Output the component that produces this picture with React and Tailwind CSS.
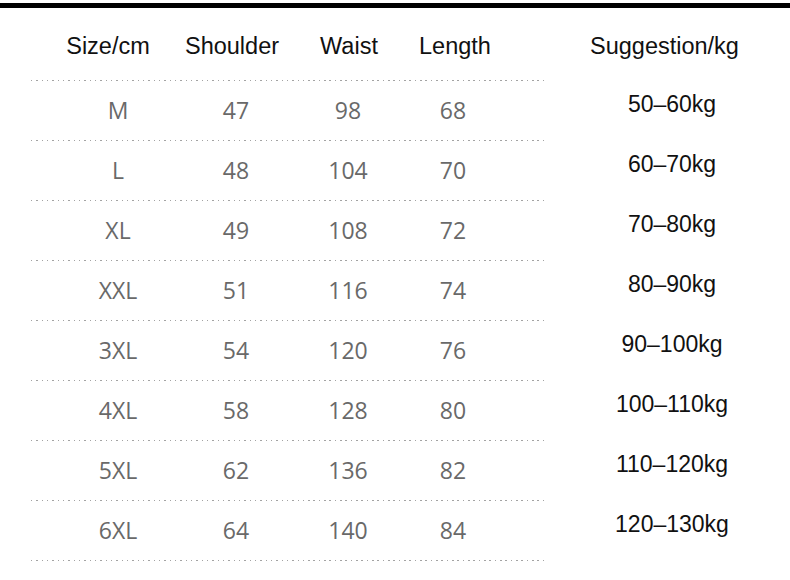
import React from "react";

const rows = [
  { size: "M", shoulder: "47", waist: "98", length: "68", weight: "50–60kg" },
  { size: "L", shoulder: "48", waist: "104", length: "70", weight: "60–70kg" },
  { size: "XL", shoulder: "49", waist: "108", length: "72", weight: "70–80kg" },
  { size: "XXL", shoulder: "51", waist: "116", length: "74", weight: "80–90kg" },
  { size: "3XL", shoulder: "54", waist: "120", length: "76", weight: "90–100kg" },
  { size: "4XL", shoulder: "58", waist: "128", length: "80", weight: "100–110kg" },
  { size: "5XL", shoulder: "62", waist: "136", length: "82", weight: "110–120kg" },
  { size: "6XL", shoulder: "64", waist: "140", length: "84", weight: "120–130kg" },
];

function DottedLine() {
  return (
    <div className="ml-[31px] h-px w-[516px] bg-[repeating-linear-gradient(90deg,#a3a3a3_0_1.5px,transparent_1.5px_5.33px)]" />
  );
}

export default function App() {
  return (
    <div className="relative h-[580px] w-[790px] overflow-hidden bg-white">
      {/* top rule */}
      <div className="mt-[3px] h-[5px] bg-black" />

      {/* header */}
      <div className="flex h-[72px] items-center pt-[6px] font-['Liberation_Sans',Arial,sans-serif] text-[23.5px] text-[#111]">
        <div className="ml-[58px] w-[100px] text-center">Size/cm</div>
        <div className="ml-[24px] w-[100px] text-center">Shoulder</div>
        <div className="ml-[17px] w-[100px] text-center">Waist</div>
        <div className="ml-[6px] w-[100px] text-center">Length</div>
        <div className="ml-[85px] w-[140px] text-center">Suggestion/kg</div>
      </div>
      <DottedLine />

      {rows.map((r) => (
        <div key={r.size}>
          <div className="flex h-[59px] items-center">
            <div className="ml-[68px] w-[100px] text-center font-['Open_Sans',sans-serif] text-[23px] text-[#696969]">
              {r.size}
            </div>
            <div className="ml-[18px] w-[100px] text-center font-['Open_Sans',sans-serif] text-[23px] text-[#696969]">
              {r.shoulder}
            </div>
            <div className="ml-[12px] w-[100px] text-center font-['Open_Sans',sans-serif] text-[23px] text-[#696969]">
              {r.waist}
            </div>
            <div className="ml-[5px] w-[100px] text-center font-['Open_Sans',sans-serif] text-[23px] text-[#696969]">
              {r.length}
            </div>
            <div className="mb-[12px] ml-[99px] w-[140px] text-center font-['Liberation_Sans',Arial,sans-serif] text-[23px] text-[#111]">
              {r.weight}
            </div>
          </div>
          <DottedLine />
        </div>
      ))}
    </div>
  );
}
